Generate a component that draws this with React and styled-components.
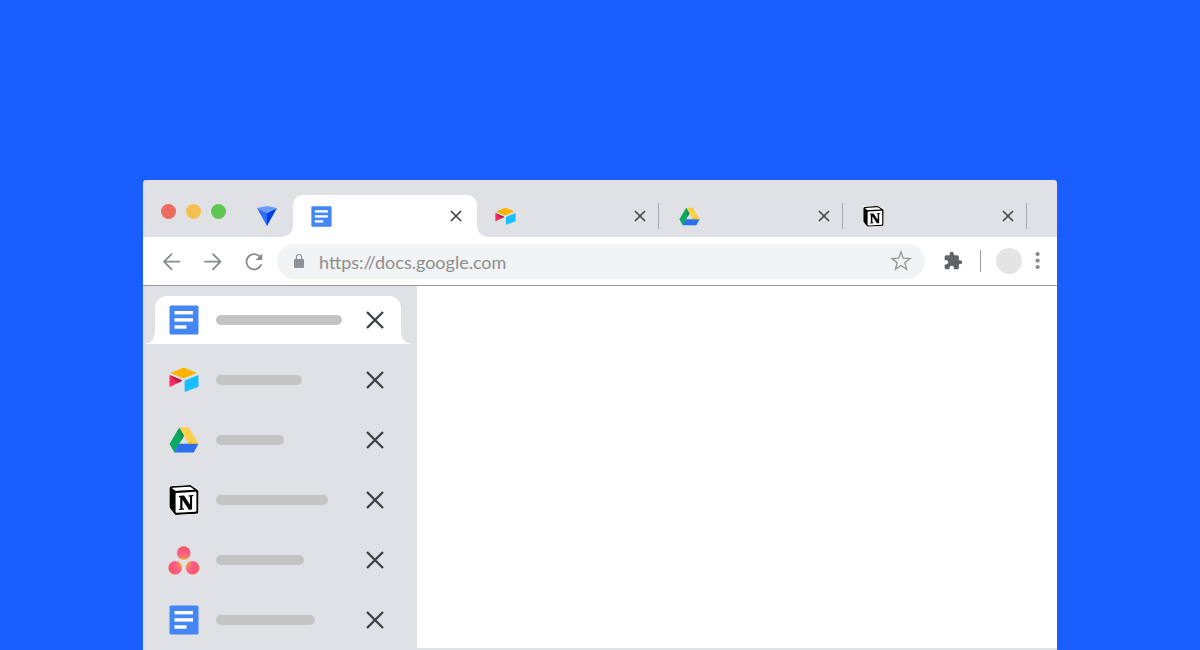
import React, { Component } from 'react';
import styled, { createGlobalStyle, css } from 'styled-components';
import { MdExtension } from 'react-icons/md';
import { SiNotion } from 'react-icons/si';

const DocsIcon = ({ size }) => (
  <svg width={size} height={size} viewBox="0 0 30 30" aria-hidden="true">
    <rect x="0.5" y="0.5" width="29" height="29" rx="1.5" fill="#4486f4" />
    <rect x="5.5" y="6" width="18.5" height="3.4" fill="#fff" />
    <rect x="5.5" y="13.2" width="18.5" height="3.4" fill="#fff" />
    <rect x="5.5" y="20.3" width="12" height="3.4" fill="#fff" />
  </svg>
);

const AirtableIcon = ({ size }) => (
  <svg width={size} height={size} viewBox="0 0 30 30" aria-hidden="true">
    <path d="M13.6 3 Q14.7 2.6 15.8 3 L27 7.4 Q27.8 7.9 27 8.3 L15.8 13.1 Q14.7 13.5 13.6 13.1 L2.6 8.5 Q1.8 8 2.6 7.5 Z" fill="#fcb400" />
    <path d="M15.6 16.4 Q15.6 15.5 16.3 15.2 L28.7 10.3 Q29.5 10.1 29.5 11 V20.8 Q29.5 21.6 28.8 21.9 L16.4 26.8 Q15.6 27 15.6 26.2 Z" fill="#18bfff" />
    <path d="M0.5 11 Q0.5 10 1.3 10.2 L12.4 15 Q13.2 15.6 12.4 16.2 L1.2 21.7 Q0.5 22 0.5 21.1 Z" fill="#f82b60" />
    <path d="M1.3 10.2 L12.4 15 Q13.2 15.6 12.4 16.2 L8.7 17.9 Z" fill="#ba1e45" />
  </svg>
);

const DriveIcon = ({ size }) => (
  <svg width={size} height={size} viewBox="0 0 30 30" aria-hidden="true">
    <path d="M10.2 2.5 L15 10.7 L5.4 27.5 L0.5 19 Z" fill="#0da960" />
    <path d="M10.2 2.5 H19.8 L29.5 19 H19.9 Z" fill="#ffcf48" />
    <path d="M10 18.8 H29.5 L24.7 27.5 H5.2 Z" fill="#2d6fe8" />
    <path d="M15 10.7 L10.2 2.5 L12.3 15.4 Z" fill="#089156" />
    <path d="M19.9 19 L18.6 16.9 L29.5 19 Z" fill="#e3ab2c" />
  </svg>
);

const AsanaIcon = ({ size }) => (
  <svg width={size} height={size} viewBox="0 0 30 30" overflow="visible" aria-hidden="true">
    <defs>
      <radialGradient id="asana" gradientUnits="userSpaceOnUse" cx="15" cy="17.5" r="17">
        <stop offset="0" stopColor="#ffb900" />
        <stop offset="0.55" stopColor="#f95d8f" />
        <stop offset="1" stopColor="#f95353" />
      </radialGradient>
    </defs>
    <g fill="url(#asana)">
      <circle cx="14.8" cy="8" r="6.8" />
      <circle cx="6.2" cy="22.7" r="6.8" />
      <circle cx="23.5" cy="22.7" r="6.8" />
    </g>
  </svg>
);

const NotionIcon = styled(SiNotion)`
  color: #000;
  background: #fff;
  clip-path: polygon(0 4%, 5% 3%, 74% 0, 100% 17%, 98% 96%, 20% 100%, 0 78%);
`

const CloseIcon = ({ size, weight }) => (
  <svg width={size} height={size} viewBox={`0 0 ${size} ${size}`} aria-hidden="true">
    <path
      d={`M1 1 L${size - 1} ${size - 1} M${size - 1} 1 L1 ${size - 1}`}
      stroke="#3c4043"
      strokeWidth={weight}
    />
  </svg>
);

const BackIcon = () => (
  <svg width="20" height="20" viewBox="0 0 20 20" fill="none" stroke="#868b8f" strokeWidth="1.8" strokeLinecap="round" strokeLinejoin="round">
    <path d="M17.4 10.7 H2 M9.6 3.1 L2 10.7 L9.6 18.3" />
  </svg>
);

const ForwardIcon = () => (
  <svg width="20" height="20" viewBox="0 0 20 20" fill="none" stroke="#868b8f" strokeWidth="1.8" strokeLinecap="round" strokeLinejoin="round">
    <path d="M1.9 10.7 H17.5 M10 3.1 L17.5 10.7 L10 18.3" />
  </svg>
);

const ReloadIcon = () => (
  <svg width="20" height="20" viewBox="0 0 20 20" fill="none">
    <path d="M17.3 13.2 A7.6 7.6 0 1 1 15.6 5.5" stroke="#868b8f" strokeWidth="1.8" />
    <path d="M18.2 2.4 V9 H11.6 Z" fill="#868b8f" />
  </svg>
);

const LockIcon = () => (
  <svg width="16" height="16" viewBox="0 0 16 16" fill="none" aria-hidden="true">
    <rect x="3" y="6" width="10" height="9" rx="1.2" fill="#8b9196" />
    <path d="M5.3 6.5 V4.4 A2.7 2.9 0 0 1 10.7 4.4 V6.5" stroke="#8b9196" strokeWidth="1.2" />
  </svg>
);

const StarIcon = () => (
  <svg width="22" height="22" viewBox="0 0 22 22" fill="none" stroke="#91969c" strokeWidth="1.3">
    <path d="M11 1.9 L13.3 8.2 L20.1 8.5 L14.8 12.7 L16.6 19.3 L11 15.5 L5.4 19.3 L7.2 12.7 L1.9 8.5 L8.7 8.2 Z" />
  </svg>
);

const MenuIcon = () => (
  <svg width="12" height="20" viewBox="0 0 12 20" fill="#868b8f">
    <circle cx="5.6" cy="3" r="2.1" />
    <circle cx="5.6" cy="9.6" r="2.1" />
    <circle cx="5.6" cy="16" r="2.1" />
  </svg>
);

const GemIcon = () => (
  <svg width="20" height="20" viewBox="0 0 20 20" aria-hidden="true">
    <path d="M0 2 L10 7 V20 Z" fill="#2f6dff" />
    <path d="M20 2 L10 7 V20 Z" fill="#0040e0" />
    <path d="M0 2 L10 0 L20 2 L10 7 Z" fill="#6e9bff" />
  </svg>
);

class App extends Component {
  constructor(props) {
    super(props);

    this.tabs = [
      { name: 'Docs', icon: DocsIcon },
      { name: 'Airtable', icon: AirtableIcon },
      { name: 'Drive', icon: DriveIcon },
      { name: 'Notion', icon: NotionIcon },
    ]

    this.sideTabs = [
      { name: 'Docs', icon: DocsIcon, length: 126 },
      { name: 'Airtable', icon: AirtableIcon, length: 86 },
      { name: 'Drive', icon: DriveIcon, length: 68 },
      { name: 'Notion', icon: NotionIcon, length: 112 },
      { name: 'Asana', icon: AsanaIcon, length: 88 },
      { name: 'Docs', icon: DocsIcon, length: 99 },
    ]

    this.state = {
      active: 0,
      url: 'https://docs.google.com',
    }
  }

  render() {
    const { active, url } = this.state;

    return (
      <AppBody>
        <GlobalStyle />
        <BrowserWindow>
          <TabStrip>
            <WindowControls>
              <WindowDot color="#ed6a5e" aria-label="Close window" />
              <WindowDot color="#f5bf4f" aria-label="Minimize window" />
              <WindowDot color="#61c554" aria-label="Zoom window" />
            </WindowControls>
            <PinnedTab><GemIcon /></PinnedTab>
            {this.tabs.map((tab, i) => (
              <Tab key={i} $active={i === active}>
                <tab.icon size={21} />
                <TabClose aria-label={`Close ${tab.name}`}>
                  <CloseIcon size={12} weight={1.6} />
                </TabClose>
                <TabDivider $hidden={i === active} />
              </Tab>
            ))}
          </TabStrip>
          <Toolbar>
            <NavButtons>
              <IconButton aria-label="Back"><BackIcon /></IconButton>
              <IconButton aria-label="Forward"><ForwardIcon /></IconButton>
              <IconButton aria-label="Reload"><ReloadIcon /></IconButton>
            </NavButtons>
            <AddressBar>
              <LockIcon />
              <AddressInput
                aria-label="Address"
                value={url}
                onChange={e => this.setState({ url: e.target.value })}
              />
              <IconButton aria-label="Bookmark"><StarIcon /></IconButton>
            </AddressBar>
            <IconButton aria-label="Extensions">
              <MdExtension size={20} color="#5f6368" />
            </IconButton>
            <ToolbarDivider />
            <Avatar aria-label="Profile" />
            <IconButton aria-label="Menu"><MenuIcon /></IconButton>
          </Toolbar>
          <Content>
            <Sidebar>
              {this.sideTabs.map((tab, i) => (
                <SideTab key={i} $active={i === active}>
                  <tab.icon size={30} />
                  <TitleBar style={{ width: tab.length }} />
                  <CloseButton aria-label={`Close ${tab.name}`}>
                    <CloseIcon size={18} weight={2.3} />
                  </CloseButton>
                </SideTab>
              ))}
            </Sidebar>
            <Page />
          </Content>
        </BrowserWindow>
      </AppBody>
    );
  }
}

const GlobalStyle = createGlobalStyle`
  * {
    box-sizing: border-box;
  }
  body {
    margin: 0;
    background: #1a5eff;
  }
  svg {
    display: block;
    flex-shrink: 0;
  }
`
const Flex = styled.div`
  display: flex;
`
const AppBody = styled(Flex)`
  height: 100vh;
  flex-direction: column;
  padding: 180px 143px 0;
  background: #1a5eff;
  overflow: hidden;
`
const BrowserWindow = styled(Flex)`
  flex: 1;
  flex-direction: column;
  border-radius: 4px 4px 0 0;
  background: #fff;
  overflow: hidden;
`
const TabStrip = styled(Flex)`
  height: 57px;
  flex-shrink: 0;
  align-items: flex-end;
  padding-left: 18px;
  background: #dfe1e5;
`
const WindowControls = styled(Flex)`
  gap: 10px;
  padding-bottom: 18px;
`
const WindowDot = styled.button`
  width: 15px;
  height: 15px;
  padding: 0;
  border: none;
  border-radius: 50%;
  background: ${props => props.color};
`
const PinnedTab = styled(Flex)`
  height: 42px;
  align-items: center;
  padding: 0 16px 0 31px;
`
/* outward curves at the foot of the active tab */
const flare = css`
  &::before,
  &::after {
    content: '';
    position: absolute;
    bottom: 0;
    width: 10px;
    height: 10px;
  }
  &::before {
    right: 100%;
    background: radial-gradient(circle at 0 0, transparent 9px, #fff 10px);
  }
  &::after {
    left: 100%;
    background: radial-gradient(circle at 100% 0, transparent 9px, #fff 10px);
  }
`
const Tab = styled(Flex)`
  position: relative;
  flex: 0 1 184px;
  height: 42px;
  align-items: center;
  padding: 0 2px 0 18px;
  border-radius: 10px 10px 0 0;
  background: ${props => (props.$active ? '#fff' : 'transparent')};
  ${props => props.$active && flare}
`
const CloseButton = styled.button`
  display: flex;
  margin-left: auto;
  padding: 0;
  border: none;
  background: none;
`
const TabClose = styled(CloseButton)`
  margin-right: 12px;
`
const TabDivider = styled.div`
  width: 1px;
  height: 26px;
  background: ${props => (props.$hidden ? 'transparent' : '#a8aaae')};
`
const Toolbar = styled(Flex)`
  height: 49px;
  flex-shrink: 0;
  align-items: center;
  padding: 0 13px 0 19px;
  border-bottom: 1px solid #97999e;
  background: #fff;
`
const NavButtons = styled(Flex)`
  gap: 21px;
`
const IconButton = styled.button`
  display: flex;
  padding: 0;
  border: none;
  background: none;
`
const AddressBar = styled(Flex)`
  flex: 1;
  height: 35px;
  align-items: center;
  margin: 0 18px 0 13px;
  padding: 0 13px 0 14px;
  border-radius: 18px;
  background: #f1f3f4;
`
const AddressInput = styled.input`
  flex: 1;
  min-width: 0;
  margin-left: 12px;
  padding: 2px 0 0;
  border: none;
  outline: none;
  background: none;
  color: #8e8e8e;
  font-family: Lato, 'Open Sans', sans-serif;
  font-size: 18px;
  line-height: 24px;
`
const ToolbarDivider = styled.div`
  width: 1px;
  height: 22px;
  margin: 0 15px 0 17px;
  background: #97999e;
`
const Avatar = styled.button`
  width: 26px;
  height: 26px;
  margin-right: 10px;
  padding: 0;
  border: none;
  border-radius: 50%;
  background: #e4e4e4;
`
const Content = styled(Flex)`
  flex: 1;
  min-height: 0;
`
const Sidebar = styled(Flex)`
  width: 274px;
  flex-shrink: 0;
  flex-direction: column;
  padding-top: 10px;
  background: #dfe1e5;
`
const SideTab = styled(Flex)`
  position: relative;
  flex-shrink: 0;
  height: ${props => (props.$active ? '48px' : '60px')};
  align-items: center;
  margin: ${props => (props.$active ? '0 16px 6px 12px' : '0 16px 0 12px')};
  padding: 0 17px 0 14px;
  border-radius: 12px 12px 0 0;
  background: ${props => (props.$active ? '#fff' : 'transparent')};
  ${props => props.$active && flare}
`
const TitleBar = styled.div`
  height: 10px;
  margin-left: 17px;
  border-radius: 5px;
  background: #c4c4c4;
`
const Page = styled.div`
  flex: 1;
  border-bottom: 2px solid #dfe1e5;
  background: #fff;
`

export default App;
